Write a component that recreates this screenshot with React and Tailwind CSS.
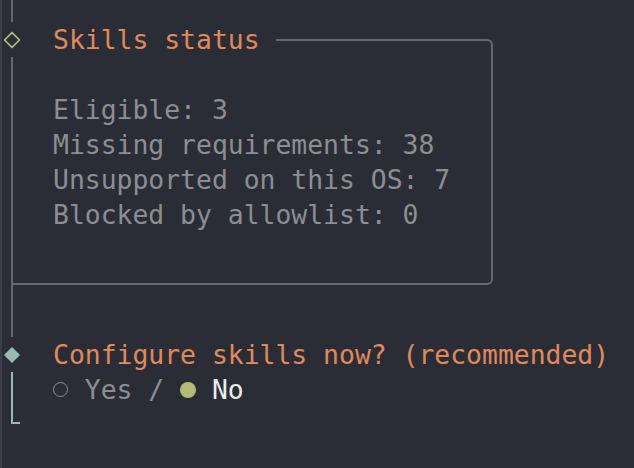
import React from 'react'

const mono = { fontFamily: '"DejaVu Sans Mono", "Liberation Mono", monospace' }

function Diamond({ filled }) {
  return (
    <svg width="18" height="18" viewBox="0 0 18 18">
      {filled
        ? <path d="M9 1 L17 9 L9 17 L1 9 Z" fill="#9ab9b2" />
        : <path d="M9 1.6 L16.4 9 L9 16.4 L1.6 9 Z" fill="none" stroke="#b5bd78" strokeWidth="1.6" />}
    </svg>
  )
}

function Gutter({ children, className = '' }) {
  return <div className={'w-[20px] shrink-0 flex justify-center ' + className}>{children}</div>
}

export default function App() {
  const stats = [
    'Eligible: 3',
    'Missing requirements: 38',
    'Unsupported on this OS: 7',
    'Blocked by allowlist: 0',
  ]

  return (
    <div className="w-[634px] h-[468px] bg-[#2a2d35] flex overflow-hidden" style={mono}>
      <div className="w-[2px] h-full bg-[#3b3e45] shrink-0" />
      <div className="flex-1 flex flex-col text-[26.4px] leading-[35px]">
        {/* guide line above */}
        <Gutter className="h-[22px]">
          <div className="w-[2px] h-full bg-[#66686d]" />
        </Gutter>

        {/* note title */}
        <div className="flex h-[35px]">
          <Gutter className="items-center">
            <Diamond />
          </Gutter>
          <div className="ml-[31px] text-[#e0895c] whitespace-pre">Skills status</div>
          <div className="ml-[16px] mt-[17px] w-[217px] h-[18px] border-t-2 border-r-2 border-[#66686d] rounded-tr-[6px]" />
        </div>

        {/* note body */}
        <div className="ml-[9px] w-[482px] border-l-2 border-r-2 border-b-2 border-[#66686d] rounded-br-[6px] pt-[35px] pb-[51px] pl-[40px] text-[#8d8e92]">
          {stats.map(s => (
            <div key={s} className="whitespace-pre">{s}</div>
          ))}
        </div>

        <Gutter className="h-[52px]">
          <div className="w-[2px] h-full bg-[#66686d]" />
        </Gutter>

        {/* confirm prompt */}
        <div className="flex h-[35px]">
          <Gutter className="items-center">
            <Diamond filled />
          </Gutter>
          <div className="ml-[31px] text-[#e0895c] whitespace-pre">Configure skills now? (recommended)</div>
        </div>

        <div className="flex h-[35px]">
          <Gutter>
            <div className="w-[2px] h-full bg-[#9ab9b2]" />
          </Gutter>
          <div className="ml-[31px] flex items-center whitespace-pre text-[#8d8e92]">
            <span className="w-[1ch] flex justify-center">
              <span className="w-[15px] h-[15px] shrink-0 rounded-full border-[1.5px] border-[#8d8e92]" />
            </span>
            <span> Yes / </span>
            <span className="w-[1ch] flex justify-center">
              <span className="w-[16px] h-[16px] shrink-0 rounded-full bg-[#b4bb76]" />
            </span>
            <span> </span>
            <span className="text-[#ededed]">No</span>
          </div>
        </div>

        <div className="flex h-[17px]">
          <div className="w-[20px] shrink-0 pl-[9px]">
            <div className="w-[9px] h-full border-l-2 border-b-2 border-[#9ab9b2]" />
          </div>
        </div>
      </div>
    </div>
  )
}
